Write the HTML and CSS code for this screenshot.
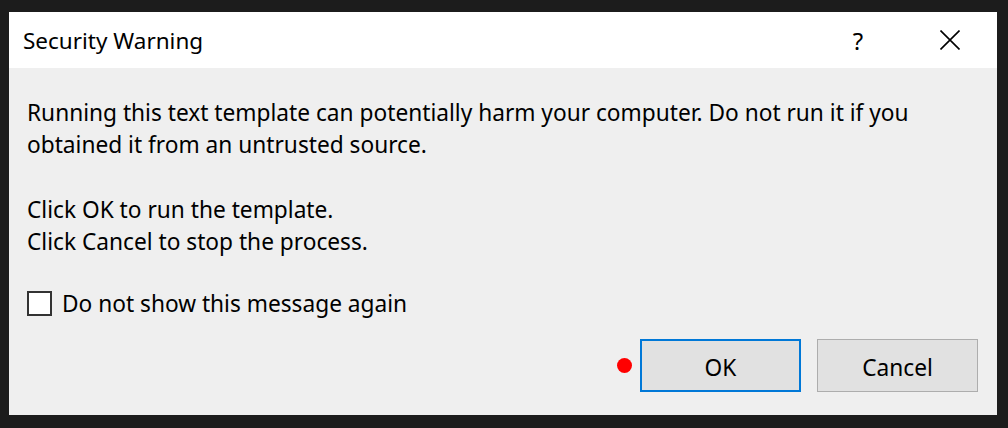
FILE: index.html
```html
<!DOCTYPE html>
<html>
<head>
<meta charset="utf-8">
<link rel="stylesheet" href="styles.css">
</head>
<body>
<div class="dialog">
  <div class="titlebar">
    <span class="title">Security Warning</span>
    <div class="caption-buttons">
      <span class="help">?</span>
      <svg class="close" width="20" height="20" viewBox="0 0 20 20"><path d="M0.5 0.5 L19.5 19.5 M19.5 0.5 L0.5 19.5" stroke="#000" stroke-width="1.6" fill="none"/></svg>
    </div>
  </div>
  <div class="content">
    <p class="para">Running this text template can potentially harm your computer. Do not run it if you obtained it from an untrusted source.</p>
    <p class="para">Click OK to run the template.<br>Click Cancel to stop the process.</p>
    <label class="check-row"><span class="checkbox"></span><span>Do not show this message again</span></label>
    <div class="buttons">
      <span class="dot"></span>
      <button class="btn btn-default">OK</button>
      <button class="btn">Cancel</button>
    </div>
  </div>
</div>
</body>
</html>
```
FILE: styles.css
```css
html, body { margin: 0; padding: 0; }
body {
  background: #1c1c1c;
  width: 1008px;
  height: 428px;
  box-sizing: border-box;
  padding: 12px 11px 13px 9px;
  font-family: "Noto Sans", "Open Sans", sans-serif;
  font-size: 22.7px;
  color: #000;
}
.dialog {
  width: 988px;
  height: 403px;
  display: flex;
  flex-direction: column;
  background: #efefef;
}
.titlebar {
  height: 56px;
  background: #fff;
  display: flex;
  align-items: center;
  justify-content: space-between;
  padding-left: 14px;
}
.title { font-size: 22.5px; }
.caption-buttons { display: flex; align-items: center; }
.help { font-size: 24px; width: 20px; text-align: center; margin-right: 72px; }
.close { margin-right: 37px; display: block; }
.content {
  flex: 1;
  display: flex;
  flex-direction: column;
  padding: 29px 19px 23px 18px;
}
.para { margin: 0 0 33px; line-height: 32px; }
.check-row { display: flex; align-items: center; gap: 10px; margin-top: -3px; }
.checkbox {
  width: 21px; height: 21px;
  border: 2px solid #333;
  background: #fff;
}
.buttons {
  margin-top: auto;
  display: flex;
  justify-content: flex-end;
  align-items: center;
}
.dot {
  width: 15px; height: 15px; border-radius: 50%;
  background: #f00;
  margin-right: 8px;
}
.btn {
  width: 161px; height: 53px;
  box-sizing: border-box;
  background: #e1e1e1;
  border: 1px solid #adadad;
  font-family: inherit;
  font-size: 22.7px;
  color: #000;
  padding: 3px 0 0;
}
.btn-default { border: 2px solid #0078d7; margin-right: 16px; }
```
